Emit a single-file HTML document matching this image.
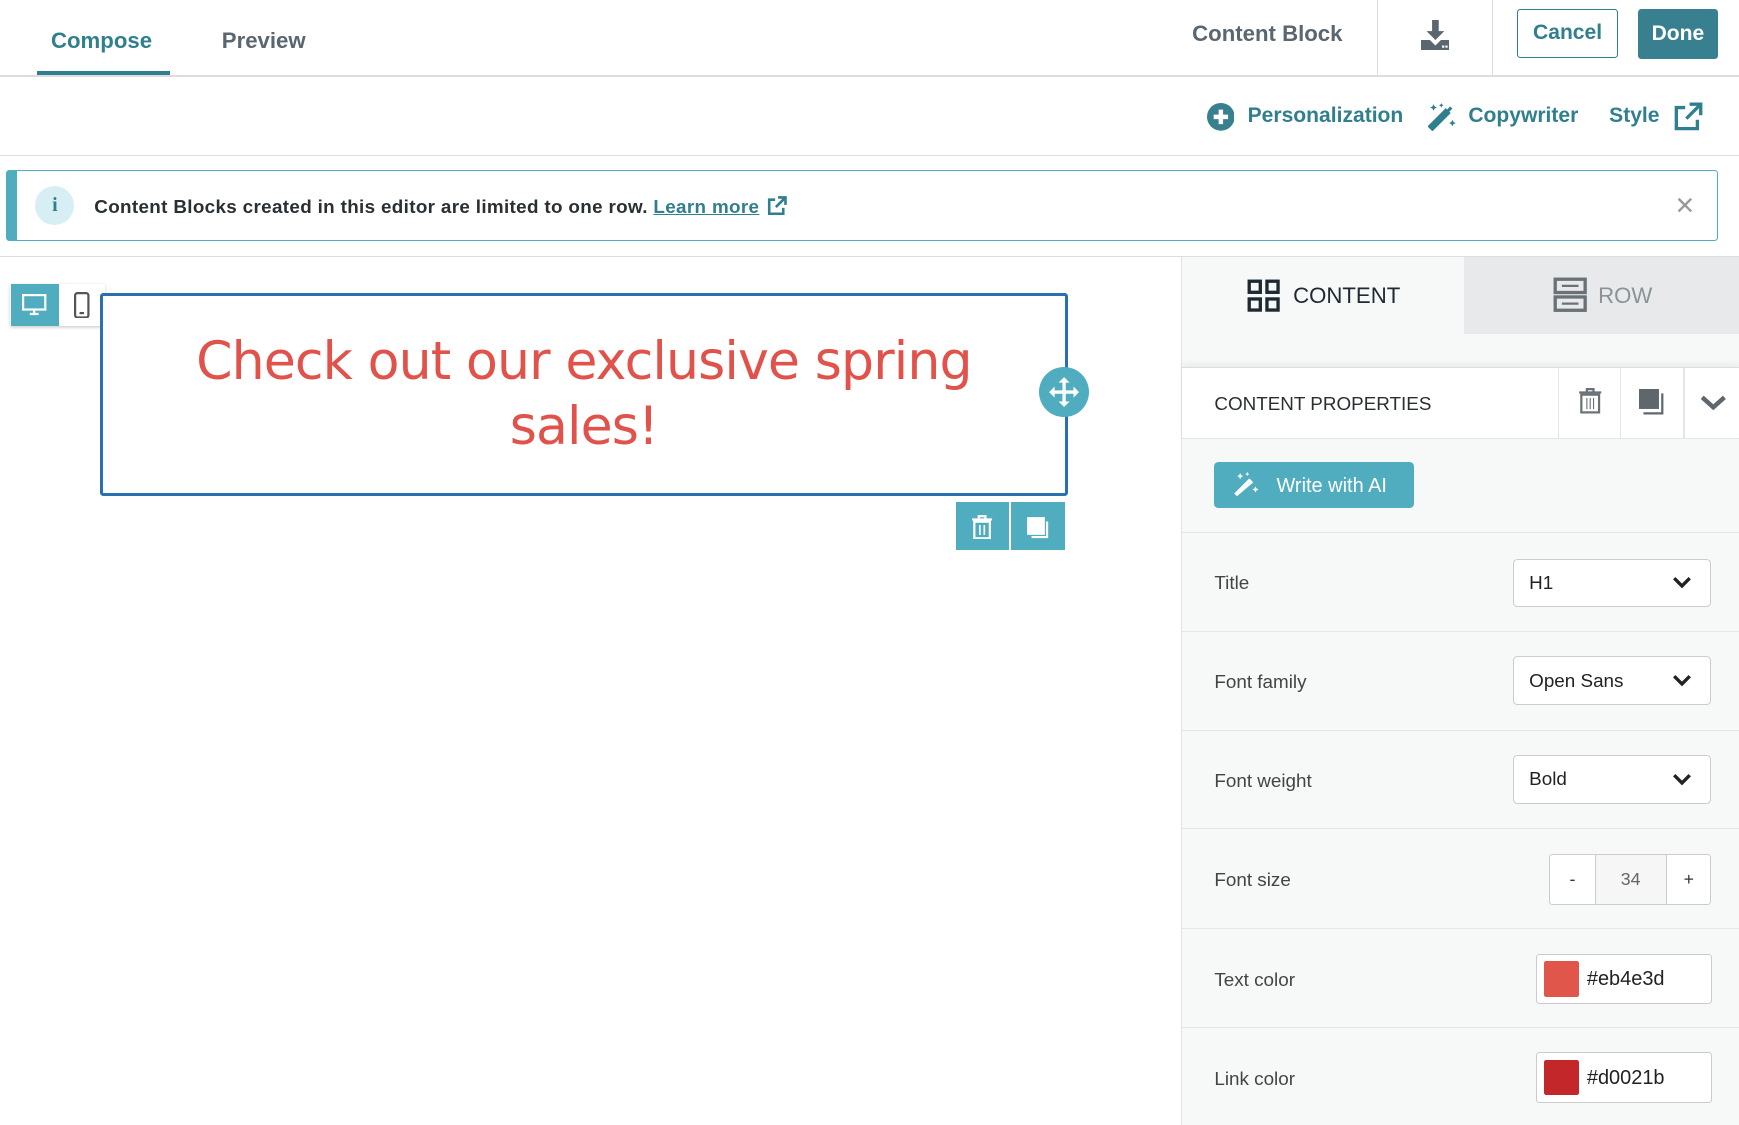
<!DOCTYPE html>
<html><head><meta charset="utf-8"><style>
html,body{margin:0;padding:0;background:#fff;overflow:hidden}
body{width:1739px;height:1125px}
#w{zoom:1.109;width:1568px;height:1015px;position:relative;font-family:"Liberation Sans",sans-serif;color:#333}
.a{position:absolute}
.row{position:absolute;left:1066px;width:502px;border-top:1px solid #e3e5e6;background:#f7f8f8}
.lbl{position:absolute;left:29px;font-size:17px;color:#444}
.sel{position:absolute;left:298px;width:177px;height:42px;border:1px solid #ccc;border-radius:4px;background:#fff;font-size:17px;color:#222}
.sel span{position:absolute;left:14px;top:11px}
.sel svg{position:absolute;right:16px;top:15px}
</style></head><body><div id="w">
<div class="a" style="left:0;top:68px;width:1568px;height:1px;background:#ddd"></div>
<div class="a" style="left:46px;top:25px;font-size:20px;font-weight:bold;color:#2f7f8f">Compose</div>
<div class="a" style="left:33px;top:64px;width:120px;height:4px;background:#2f7f8f"></div>
<div class="a" style="left:200px;top:25px;font-size:20px;font-weight:bold;color:#5a6670">Preview</div>
<div class="a" style="left:1075px;top:19px;font-size:20px;font-weight:bold;color:#5a6670">Content Block</div>
<div class="a" style="left:1242px;top:0;width:1px;height:68px;background:#ddd"></div>
<div class="a" style="left:1345px;top:0;width:1px;height:68px;background:#ddd"></div>
<svg class="a" style="left:1281px;top:18px" width="26" height="28" viewBox="0 0 26 28"><path d="M10 0h6v10h5l-8 8-8-8h5z" fill="#5a6670"/><path d="M0 18h8l5 5 5-5h8v9H0z" fill="#5a6670"/><rect x="19" y="23" width="2" height="2" fill="#fff"/><rect x="22" y="23" width="2" height="2" fill="#fff"/></svg>
<div class="a" style="left:1368px;top:8px;width:91px;height:44px;border:1px solid #2f7f8f;border-radius:3px;box-sizing:border-box;font-size:19px;font-weight:bold;color:#2f7f8f;text-align:center;line-height:42px">Cancel</div>
<div class="a" style="left:1477px;top:8px;width:72px;height:45px;background:#38808f;border-radius:3px;font-size:19px;font-weight:bold;color:#fff;text-align:center;line-height:45px">Done</div>
<div class="a" style="left:0;top:140px;width:1568px;height:1px;background:#ddd"></div>
<svg class="a" style="left:1088px;top:93px" width="25" height="25"><circle cx="12.5" cy="12.5" r="12.5" fill="#38808f"/><path d="M12.5 6v13M6 12.5h13" stroke="#fff" stroke-width="4"/></svg>
<div class="a" style="left:1125px;top:94px;font-size:19px;font-weight:bold;color:#2f7f8f">Personalization</div>
<svg class="a" style="left:1288px;top:92px" width="26" height="26" viewBox="0 0 26 26"><path d="M4 24l-2-2 14-14 2 2z" fill="none" stroke="#2f7f8f" stroke-width="3.5"/><path d="M16 8l4-4 2 2-4 4z" fill="#2f7f8f"/><path d="M5 2l1 2 2 1-2 1-1 2-1-2-2-1 2-1zM22 16l1 2 2 1-2 1-1 2-1-2-2-1 2-1zM12 1l.7 1.3 1.3.7-1.3.7L12 5l-.7-1.3L10 3l1.3-.7z" fill="#2f7f8f"/></svg>
<div class="a" style="left:1324px;top:94px;font-size:19px;font-weight:bold;color:#2f7f8f">Copywriter</div>
<div class="a" style="left:1451px;top:94px;font-size:19px;font-weight:bold;color:#2f7f8f">Style</div>
<svg class="a" style="left:1509px;top:92px" width="27" height="27" viewBox="0 0 27 27"><path d="M11 5H3v19h19v-8" fill="none" stroke="#2f7f8f" stroke-width="3"/><path d="M12 15L24 3M15 2h10v10" fill="none" stroke="#2f7f8f" stroke-width="3"/></svg>
<div class="a" style="left:5px;top:153px;width:1544px;height:64px;border:1px solid #4fadbf;border-left:10px solid #4fadbf;box-sizing:border-box;border-radius:3px;background:#fff"></div>
<div class="a" style="left:32px;top:168px;width:35px;height:35px;border-radius:50%;background:#d7eff4;color:#2f7f8f;font-weight:bold;font-family:'Liberation Serif',serif;font-size:18px;text-align:center;line-height:35px">i</div>
<div class="a" style="left:85px;top:177px;font-size:17px;font-weight:bold;color:#2a2f33;letter-spacing:0.3px">Content Blocks created in this editor are limited to one row. <span style="color:#2f7f8f;text-decoration:underline">Learn more</span></div>
<svg class="a" style="left:692px;top:177px" width="18" height="18" viewBox="0 0 27 27"><path d="M11 5H3v19h19v-8" fill="none" stroke="#2f7f8f" stroke-width="3.5"/><path d="M12 15L24 3M15 2h10v10" fill="none" stroke="#2f7f8f" stroke-width="3.5"/></svg>
<div class="a" style="left:1510px;top:172px;font-size:22px;color:#999">✕</div>
<div class="a" style="left:0;top:231px;width:1568px;height:1px;background:#ddd"></div>
<div class="a" style="left:9px;top:256px;width:86px;height:38px;background:#fff;box-shadow:0 1px 3px rgba(0,0,0,.2);border-radius:2px"></div>
<div class="a" style="left:10px;top:256px;width:43px;height:38px;background:#4fadbf"></div>
<svg class="a" style="left:20px;top:265px" width="22" height="20"><rect x="1" y="1" width="20" height="13" fill="none" stroke="#fff" stroke-width="2"/><path d="M7 18h8M11 14v4" stroke="#fff" stroke-width="2"/></svg>
<svg class="a" style="left:67px;top:263px" width="14" height="24"><rect x="1" y="1" width="12" height="22" rx="2" fill="none" stroke="#555" stroke-width="2"/><path d="M5 19h4" stroke="#555" stroke-width="2"/></svg>
<div class="a" style="left:90px;top:264px;width:873px;height:183px;border:3px solid #2a6fb0;box-sizing:border-box;border-radius:3px;background:#fff"></div>
<div class="a" style="left:93px;top:298px;width:867px;text-align:center;font-family:'DejaVu Sans','Liberation Sans',sans-serif;font-size:47px;line-height:58px;color:#e0524a;letter-spacing:-0.8px">Check out our exclusive spring<br>sales!</div>
<div class="a" style="left:937px;top:331px;width:45px;height:45px;border-radius:50%;background:#4fadbf"></div>
<svg class="a" style="left:945px;top:339px" width="29" height="29" viewBox="0 0 29 29"><path d="M14.5 3v23M3 14.5h23" stroke="#fff" stroke-width="3"/><path d="M14.5 1l5 5h-10zM14.5 28l5-5h-10zM1 14.5l5-5v10zM28 14.5l-5-5v10z" fill="#fff"/></svg>
<div class="a" style="left:862px;top:453px;width:48px;height:43px;background:#4fadbf"></div>
<div class="a" style="left:912px;top:453px;width:48px;height:43px;background:#4fadbf"></div>
<svg class="a" style="left:876px;top:464px" width="20" height="22"><path d="M1 4h18M7 4V1h6v3" stroke="#fff" stroke-width="2" fill="none"/><rect x="3" y="6" width="14" height="15" fill="none" stroke="#fff" stroke-width="2"/><path d="M8 9v9M12 9v9" stroke="#fff" stroke-width="1.5"/></svg>
<svg class="a" style="left:925px;top:465px" width="22" height="22"><rect x="1" y="1" width="16" height="16" fill="#fff"/><path d="M19 5v14H5" stroke="#fff" stroke-width="2" fill="none"/></svg>
<div class="a" style="left:1065px;top:232px;width:1px;height:783px;background:#e0e2e3"></div>
<div class="a" style="left:1066px;top:232px;width:502px;height:783px;background:#f7f8f8"></div>
<div class="a" style="left:1320px;top:232px;width:248px;height:69px;background:#e8e9eb"></div>
<svg class="a" style="left:1124px;top:252px" width="30" height="30"><rect x="2" y="2" width="10" height="10" fill="none" stroke="#1e2a33" stroke-width="3"/><rect x="18" y="2" width="10" height="10" fill="none" stroke="#1e2a33" stroke-width="3"/><rect x="2" y="18" width="10" height="10" fill="none" stroke="#1e2a33" stroke-width="3"/><rect x="18" y="18" width="10" height="10" fill="none" stroke="#1e2a33" stroke-width="3"/></svg>
<div class="a" style="left:1166px;top:255px;font-size:20px;color:#1e2a33">CONTENT</div>
<svg class="a" style="left:1400px;top:250px" width="31" height="32"><rect x="2" y="2" width="27" height="12" fill="none" stroke="#6a7278" stroke-width="3"/><rect x="2" y="18" width="27" height="12" fill="none" stroke="#6a7278" stroke-width="3"/><path d="M8 8h15M8 24h15" stroke="#6a7278" stroke-width="2"/></svg>
<div class="a" style="left:1441px;top:255px;font-size:20px;color:#8a9399">ROW</div>
<div class="a" style="left:1066px;top:331px;width:502px;height:63px;background:#fff;border-top:1px solid #ddd;border-bottom:1px solid #e3e5e6;box-shadow:0 -3px 5px rgba(0,0,0,.05)"></div>
<div class="a" style="left:1095px;top:354px;font-size:17px;color:#2a2f33">CONTENT PROPERTIES</div>
<div class="a" style="left:1405px;top:332px;width:1px;height:63px;background:#e3e5e6"></div>
<div class="a" style="left:1461px;top:332px;width:1px;height:63px;background:#e3e5e6"></div>
<div class="a" style="left:1518px;top:332px;width:1px;height:63px;background:#e3e5e6"></div>
<svg class="a" style="left:1423px;top:350px" width="22" height="24"><path d="M1 4h20M8 4V1h6v3" stroke="#6a7278" stroke-width="2" fill="none"/><rect x="3" y="6" width="16" height="16" fill="none" stroke="#6a7278" stroke-width="2"/><path d="M8 9v10M11 9v10M14 9v10" stroke="#6a7278" stroke-width="1"/></svg>
<svg class="a" style="left:1478px;top:351px" width="24" height="24"><rect x="0" y="0" width="18" height="18" fill="#5f676d"/><path d="M21 4v18H4" stroke="#5f676d" stroke-width="2" fill="none"/></svg>
<svg class="a" style="left:1533px;top:355px" width="24" height="16"><path d="M2 3l10 9 10-9" stroke="#5f676d" stroke-width="4" fill="none"/></svg>
<div class="a" style="left:1095px;top:417px;width:180px;height:41px;background:#4fadbf;border-radius:4px"></div>
<svg class="a" style="left:1113px;top:425px" width="24" height="24" viewBox="0 0 26 26"><path d="M3 23l-1-1 13-13 2 2z" fill="none" stroke="#fff" stroke-width="2.5"/><path d="M6 2l1 2 2 1-2 1-1 2-1-2-2-1 2-1zM21 15l1 2 2 1-2 1-1 2-1-2-2-1 2-1zM13 1l.7 1.3 1.3.7-1.3.7L13 5l-.7-1.3L11 3l1.3-.7z" fill="#fff"/></svg>
<div class="a" style="left:1151px;top:428px;font-size:18px;color:#fff">Write with AI</div>
<div class="row" style="top:480px;height:89px"><div class="lbl" style="top:35px">Title</div><div class="sel" style="top:23px"><span>H1</span><svg width="18" height="12"><path d="M2 2l7 7 7-7" stroke="#222" stroke-width="3" fill="none"/></svg></div></div>
<div class="row" style="top:569px;height:89px"><div class="lbl" style="top:35px">Font family</div><div class="sel" style="top:22px"><span>Open Sans</span><svg width="18" height="12"><path d="M2 2l7 7 7-7" stroke="#222" stroke-width="3" fill="none"/></svg></div></div>
<div class="row" style="top:658px;height:89px"><div class="lbl" style="top:35px">Font weight</div><div class="sel" style="top:22px"><span>Bold</span><svg width="18" height="12"><path d="M2 2l7 7 7-7" stroke="#222" stroke-width="3" fill="none"/></svg></div></div>
<div class="row" style="top:747px;height:90px"><div class="lbl" style="top:36px">Font size</div>
<div class="a" style="left:331px;top:22px;width:144px;height:44px;border:1px solid #ccc;border-radius:3px;background:#fff;font-size:16px">
<div class="a" style="left:0;top:0;width:40px;height:44px;text-align:center;line-height:44px;border-right:1px solid #ccc">-</div>
<div class="a" style="left:41px;top:0;width:63px;height:44px;text-align:center;line-height:44px;color:#666;background:#f6f6f6">34</div>
<div class="a" style="left:104px;top:0;width:40px;height:44px;text-align:center;line-height:44px;border-left:1px solid #ccc">+</div></div></div>
<div class="row" style="top:837px;height:89px"><div class="lbl" style="top:36px">Text color</div>
<div class="a" style="left:319px;top:22px;width:157px;height:44px;border:1px solid #ccc;border-radius:3px;background:#fff"><div class="a" style="left:6px;top:6px;width:32px;height:32px;background:#e0564a;border-radius:2px"></div><div class="a" style="left:45px;top:12px;font-size:18px;color:#222">#eb4e3d</div></div></div>
<div class="row" style="top:926px;height:89px"><div class="lbl" style="top:36px">Link color</div>
<div class="a" style="left:319px;top:22px;width:157px;height:44px;border:1px solid #ccc;border-radius:3px;background:#fff"><div class="a" style="left:6px;top:6px;width:32px;height:32px;background:#c4272a;border-radius:2px"></div><div class="a" style="left:45px;top:12px;font-size:18px;color:#222">#d0021b</div></div></div>
</div></body></html>
